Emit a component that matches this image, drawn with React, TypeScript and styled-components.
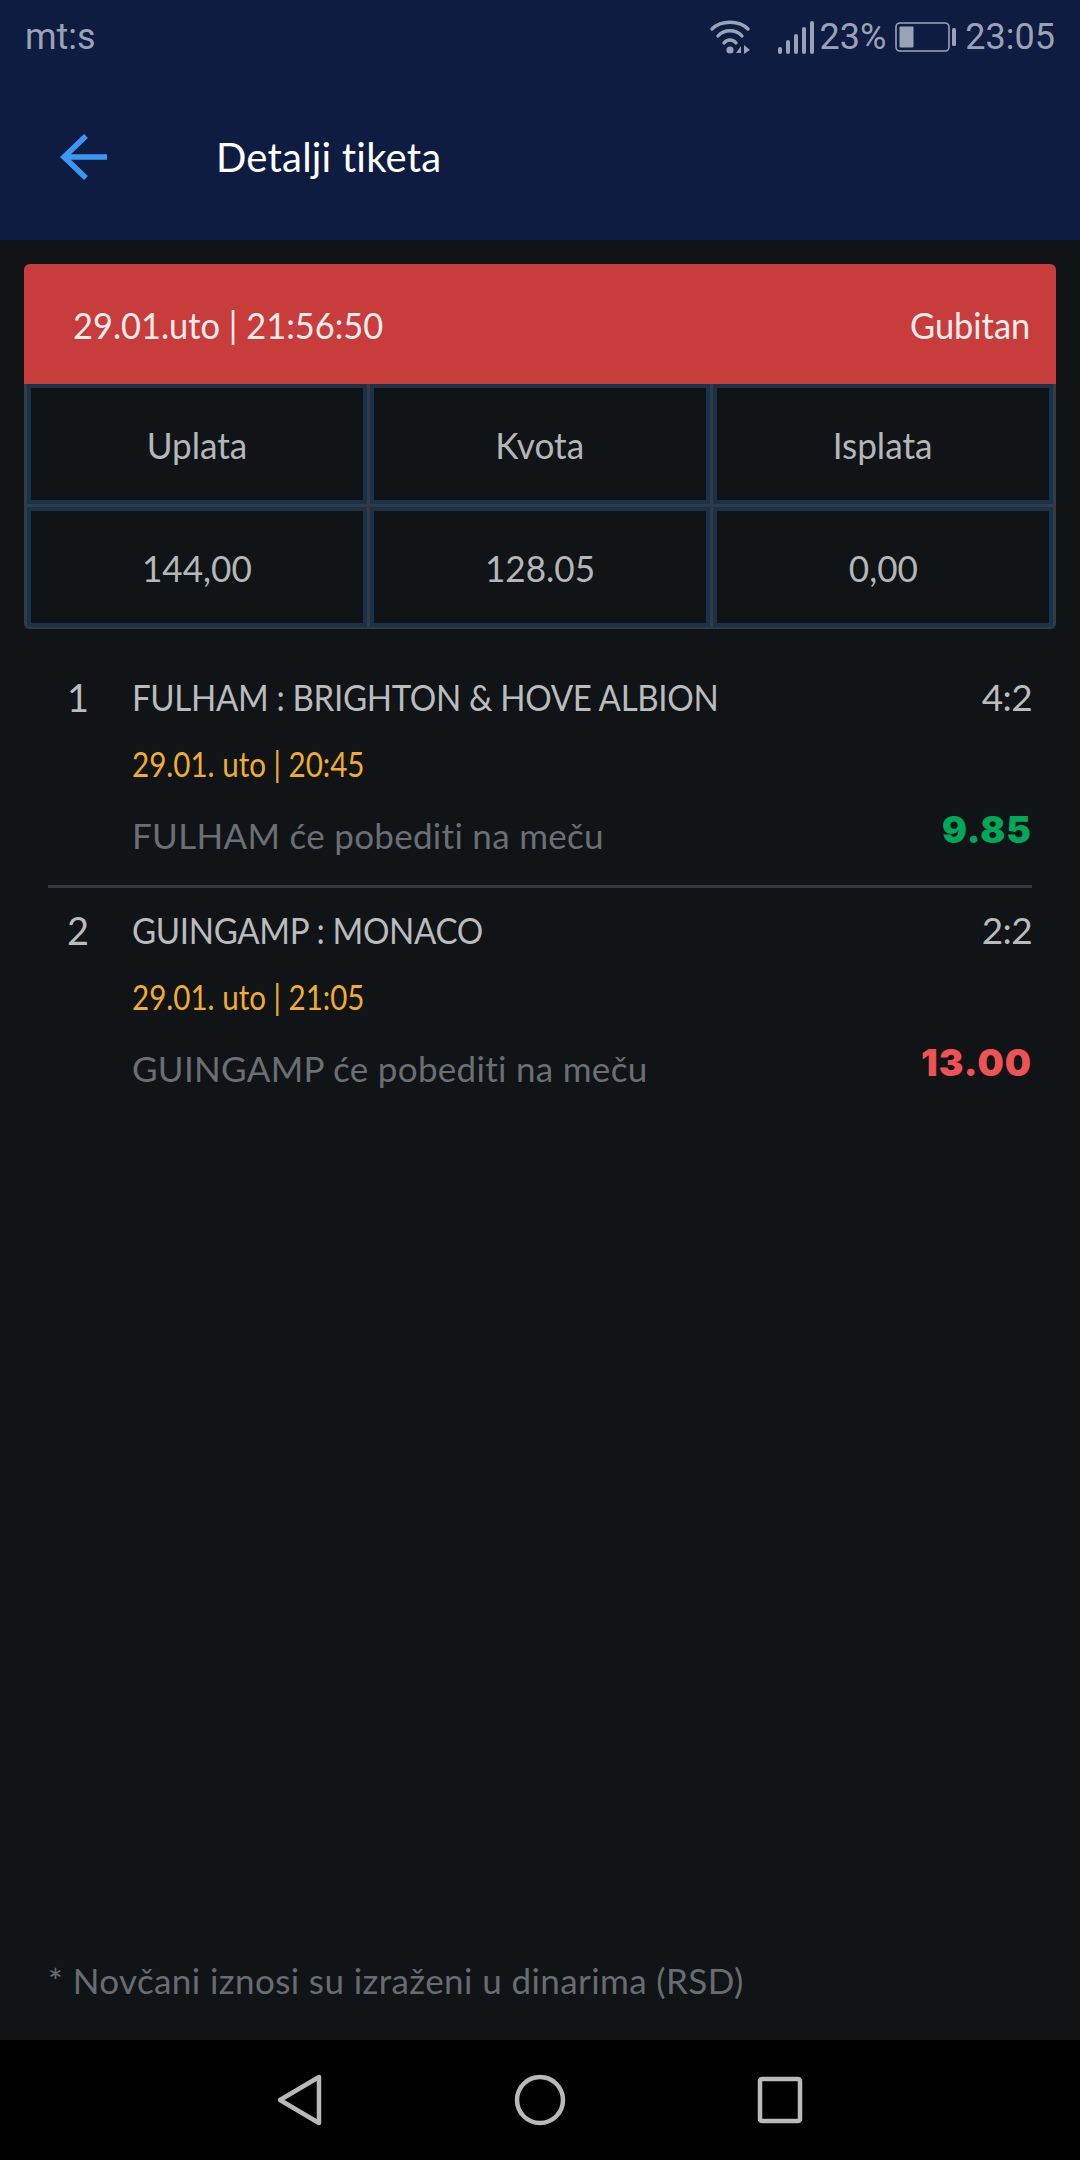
import styled, { createGlobalStyle } from "styled-components";

const GlobalStyle = createGlobalStyle`
  html, body {
    margin: 0;
    padding: 0;
    background: #101417;
  }
`;

const Screen = styled.div`
  width: 1080px;
  height: 2160px;
  display: flex;
  flex-direction: column;
  background: #101417;
  font-family: Lato, "Open Sans", sans-serif;
`;

const TopArea = styled.header`
  height: 240px;
  flex-shrink: 0;
  background: #0e1c42;
  display: flex;
  flex-direction: column;
`;

const StatusBar = styled.div`
  height: 74px;
  padding: 0 25px;
  display: flex;
  align-items: center;
  justify-content: space-between;
  color: #9aa2b6;
  font-family: Roboto, sans-serif;
  font-size: 36px;
`;

const StatusRight = styled.div`
  display: flex;
  align-items: center;
`;

const AppBar = styled.div`
  flex: 1;
  display: flex;
  align-items: center;
  padding: 0 60px;
  gap: 108px;
`;

const Title = styled.div`
  color: #ffffff;
  font-size: 40px;
  letter-spacing: 0.2px;
`;

const Main = styled.main`
  flex: 1;
  display: flex;
  flex-direction: column;
  padding: 24px 24px 0;
`;

const Card = styled.section`
  background: #343a42;
  border-radius: 6px;
  overflow: hidden;
`;

const CardHead = styled.div`
  height: 120px;
  background: #c93c3c;
  color: #fdeeee;
  font-size: 37px;
  display: flex;
  align-items: center;
  justify-content: space-between;
  padding: 0 26px 0 49px;

  span {
    display: inline-block;
    transform: scaleX(0.93);
    transform-origin: left;
  }

  span:last-child {
    transform-origin: right;
  }
`;

const StatGrid = styled.div`
  display: grid;
  grid-template-columns: repeat(3, 1fr);
  grid-auto-rows: 120px;
  gap: 3px;
  padding: 0 3px 2px;
`;

const StatCell = styled.div`
  border: 4px solid #17324a;
  background: #101417;
  color: #b4b6b8;
  font-size: 37px;
  display: flex;
  align-items: center;
  justify-content: center;

  span {
    display: inline-block;
    transform: scaleX(0.95);
  }
`;

const MatchList = styled.div`
  padding: 45px 24px 0;
  display: flex;
  flex-direction: column;
`;

const Match = styled.article`
  display: grid;
  grid-template-columns: 60px 1fr auto;
  column-gap: 24px;
  padding-bottom: 30px;

  & + & {
    border-top: 3px solid #34373c;
    padding-top: 19px;
  }
`;

const MatchNo = styled.div`
  color: #b9bbbd;
  font-size: 38px;
  line-height: 46px;
  text-align: center;
`;

const MatchName = styled.div`
  color: #b9bbbd;
  font-size: 37px;
  line-height: 46px;
  letter-spacing: -0.4px;
  white-space: nowrap;
  transform: scaleX(0.895);
  transform-origin: left;
`;

const Score = styled.div`
  color: #b9bbbd;
  font-size: 37px;
  line-height: 46px;
  letter-spacing: -0.6px;
  text-align: right;
`;

const MatchTime = styled.div`
  grid-column: 2 / 4;
  margin-top: 24px;
  color: #f0ac2f;
  font-size: 34px;
  line-height: 40px;
  transform: scaleX(0.87);
  transform-origin: left;
`;

const Pick = styled.div`
  grid-column: 2;
  margin-top: 31px;
  color: #6b6f73;
  font-size: 35px;
  line-height: 40px;
  letter-spacing: 0.3px;
`;

const Odds = styled.div<{ $color: string }>`
  margin-top: 26px;
  color: ${(p) => p.$color};
  font-family: Inter, sans-serif;
  font-weight: 900;
  font-size: 37px;
  line-height: 40px;
  letter-spacing: 1px;
  text-align: right;
`;

const Footnote = styled.div`
  margin-top: auto;
  padding: 0 24px 40px;
  color: #686c70;
  font-size: 35px;
  line-height: 40px;
  letter-spacing: 0.4px;
`;

const NavBar = styled.nav`
  height: 120px;
  flex-shrink: 0;
  background: #000000;
  display: grid;
  grid-template-columns: repeat(3, 60px);
  justify-content: center;
  column-gap: 180px;
  align-items: center;
`;

const WifiGlyph = styled.svg`
  margin-right: 25px;
`;

const SignalGlyph = styled.svg`
  margin-right: 5px;
`;

const BatteryGlyph = styled.svg`
  margin: 0 8px 0 9px;
`;

const WifiIcon = () => (
  <WifiGlyph width="42" height="36" viewBox="0 0 42 36">
    <g fill="none" stroke="#9aa2b6" strokeWidth="3.4" strokeLinecap="round">
      <path d="M2 10 C11 1 29 1 38 10" />
      <path d="M8 17 C14 10 26 10 32 17" />
      <path d="M14 24 C17 20 23 20 26 24" />
    </g>
    <circle cx="20" cy="31" r="3.6" fill="#9aa2b6" />
    <path d="M31 34 L31 27 L26 34 Z M34 26 L34 35 L40 31 Z" fill="#9aa2b6" />
  </WifiGlyph>
);

const SignalIcon = () => (
  <SignalGlyph width="38" height="36" viewBox="0 0 38 36">
    <g fill="#9aa2b6">
      <rect x="1" y="28" width="4" height="7" rx="2" />
      <rect x="9" y="21" width="4" height="14" rx="2" />
      <rect x="17" y="15" width="4" height="20" rx="2" />
      <rect x="25" y="8" width="4" height="27" rx="2" />
      <rect x="33" y="2" width="4" height="33" rx="2" />
    </g>
  </SignalGlyph>
);

const BatteryIcon = () => (
  <BatteryGlyph width="62" height="32" viewBox="0 0 62 32">
    <rect x="1" y="2" width="53" height="28" rx="4" fill="none" stroke="#9aa2b6" strokeWidth="1.6" />
    <rect x="4.5" y="5.5" width="14" height="21" rx="1" fill="#9aa2b6" />
    <rect x="57" y="7" width="4" height="18" rx="1.5" fill="#9aa2b6" />
  </BatteryGlyph>
);

const BackArrow = () => (
  <svg width="48" height="48" viewBox="0 0 48 48">
    <path d="M47 24 H4 M26 3 L4 24 L26 45" fill="none" stroke="#3b97f3" strokeWidth="5.5" />
  </svg>
);

const navStroke = { fill: "none", stroke: "#b9b9b9", strokeWidth: 4.5, strokeLinejoin: "round" as const };

const NavBack = () => (
  <svg width="60" height="60" viewBox="0 0 60 60">
    <path d="M49 7 V53 L10 30 Z" {...navStroke} />
  </svg>
);

const NavHome = () => (
  <svg width="60" height="60" viewBox="0 0 60 60">
    <circle cx="30" cy="30" r="23" {...navStroke} />
  </svg>
);

const NavRecent = () => (
  <svg width="60" height="60" viewBox="0 0 60 60">
    <rect x="10" y="9" width="40" height="42" rx="2" {...navStroke} />
  </svg>
);

const stats = ["Uplata", "Kvota", "Isplata", "144,00", "128.05", "0,00"];

const matches = [
  { no: 1, name: "FULHAM : BRIGHTON & HOVE ALBION", score: "4:2", time: "29.01. uto | 20:45", pick: "FULHAM će pobediti na meču", odds: "9.85", color: "#00a859" },
  { no: 2, name: "GUINGAMP : MONACO", score: "2:2", time: "29.01. uto | 21:05", pick: "GUINGAMP će pobediti na meču", odds: "13.00", color: "#ee5253" },
];

const App = () => {
  return (
    <Screen>
      <GlobalStyle />
      <TopArea>
        <StatusBar>
          <span>mt:s</span>
          <StatusRight>
            <WifiIcon />
            <SignalIcon />
            <span>23%</span>
            <BatteryIcon />
            <span>23:05</span>
          </StatusRight>
        </StatusBar>
        <AppBar>
          <BackArrow />
          <Title>Detalji tiketa</Title>
        </AppBar>
      </TopArea>
      <Main>
        <Card>
          <CardHead>
            <span>29.01.uto | 21:56:50</span>
            <span>Gubitan</span>
          </CardHead>
          <StatGrid>
            {stats.map((s) => (
              <StatCell key={s}>
                <span>{s}</span>
              </StatCell>
            ))}
          </StatGrid>
        </Card>
        <MatchList>
          {matches.map((m) => (
            <Match key={m.no}>
              <MatchNo>{m.no}</MatchNo>
              <MatchName>{m.name}</MatchName>
              <Score>{m.score}</Score>
              <MatchTime>{m.time}</MatchTime>
              <Pick>{m.pick}</Pick>
              <Odds $color={m.color}>{m.odds}</Odds>
            </Match>
          ))}
        </MatchList>
        <Footnote>* Novčani iznosi su izraženi u dinarima (RSD)</Footnote>
      </Main>
      <NavBar>
        <NavBack />
        <NavHome />
        <NavRecent />
      </NavBar>
    </Screen>
  );
};

export default App;
